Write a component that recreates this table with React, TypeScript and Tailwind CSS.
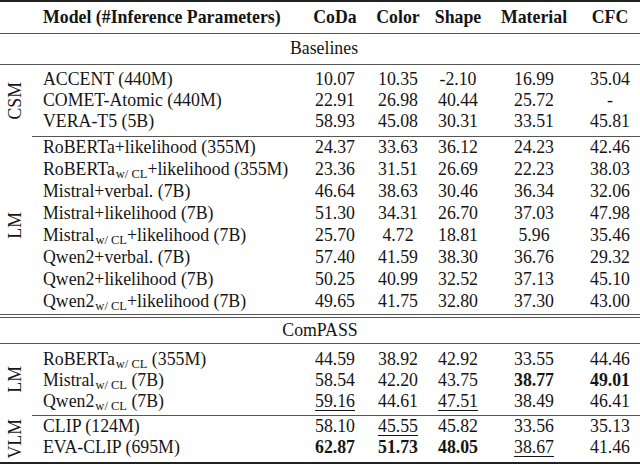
import type { ReactNode } from "react"

type Cell = string | { v: string; b?: boolean; u?: boolean }

interface Row {
  name: ReactNode
  vals: Cell[]
}

const colW = ["w-[66px]", "w-[60px]", "w-[60px]", "w-[92px]", "w-[60px]"]
const heads = ["CoDa", "Color", "Shape", "Material", "CFC"]

const wcl = <sub className="text-[12.5px] ml-[1px]">w/ CL</sub>

const csm: Row[] = [
  { name: "ACCENT (440M)", vals: ["10.07", "10.35", "-2.10", "16.99", "35.04"] },
  { name: "COMET-Atomic (440M)", vals: ["22.91", "26.98", "40.44", "25.72", "-"] },
  { name: "VERA-T5 (5B)", vals: ["58.93", "45.08", "30.31", "33.51", "45.81"] },
]

const lm: Row[] = [
  { name: "RoBERTa+likelihood (355M)", vals: ["24.37", "33.63", "36.12", "24.23", "42.46"] },
  { name: <>RoBERTa{wcl}+likelihood (355M)</>, vals: ["23.36", "31.51", "26.69", "22.23", "38.03"] },
  { name: "Mistral+verbal. (7B)", vals: ["46.64", "38.63", "30.46", "36.34", "32.06"] },
  { name: "Mistral+likelihood (7B)", vals: ["51.30", "34.31", "26.70", "37.03", "47.98"] },
  { name: <>Mistral{wcl}+likelihood (7B)</>, vals: ["25.70", "4.72", "18.81", "5.96", "35.46"] },
  { name: "Qwen2+verbal. (7B)", vals: ["57.40", "41.59", "38.30", "36.76", "29.32"] },
  { name: "Qwen2+likelihood (7B)", vals: ["50.25", "40.99", "32.52", "37.13", "45.10"] },
  { name: <>Qwen2{wcl}+likelihood (7B)</>, vals: ["49.65", "41.75", "32.80", "37.30", "43.00"] },
]

const lm2: Row[] = [
  { name: <>RoBERTa{wcl} (355M)</>, vals: ["44.59", "38.92", "42.92", "33.55", "44.46"] },
  { name: <>Mistral{wcl} (7B)</>, vals: ["58.54", "42.20", "43.75", { v: "38.77", b: true }, { v: "49.01", b: true }] },
  { name: <>Qwen2{wcl} (7B)</>, vals: [{ v: "59.16", u: true }, "44.61", { v: "47.51", u: true }, "38.49", "46.41"] },
]

const vlm: Row[] = [
  { name: "CLIP (124M)", vals: ["58.10", { v: "45.55", u: true }, "45.82", "33.56", "35.13"] },
  { name: "EVA-CLIP (695M)", vals: [{ v: "62.87", b: true }, { v: "51.73", b: true }, { v: "48.05", b: true }, { v: "38.67", u: true }, "41.46"] },
]

function Num({ c }: { c: Cell }) {
  if (typeof c === "string") return <>{c}</>
  return (
    <span className={(c.b ? "font-bold " : "") + (c.u ? "underline decoration-1 underline-offset-[3px]" : "")}>{c.v}</span>
  )
}

function TRow({ row, h }: { row: Row; h: string }) {
  return (
    <div className={"flex items-center " + h}>
      <div className="w-[270px] pl-[11px] whitespace-nowrap">{row.name}</div>
      {row.vals.map((v, i) => (
        <div key={i} className={"text-center " + colW[i]}>
          <Num c={v} />
        </div>
      ))}
    </div>
  )
}

function Section({ label, rows, h, className, cmid }: { label: string; rows: Row[]; h: string; className: string; cmid?: boolean }) {
  return (
    <div className="flex">
      <div className="w-[32px] flex items-center justify-center">
        <span className="[writing-mode:vertical-rl] rotate-180 leading-none">{label}</span>
      </div>
      <div className={"flex-1 " + (cmid ? "border-t border-[#555] " : "") + className}>
        {rows.map((r, i) => (
          <TRow key={i} row={r} h={h} />
        ))}
      </div>
    </div>
  )
}

export default function App() {
  return (
    <div className="w-[640px] h-[464px] bg-white text-[#151515] text-[17.8px] font-[family-name:Liberation_Serif,serif] leading-none">
      <div className="border-t-2 border-[#222]" />
      {/* header */}
      <div className="flex items-center h-[32px] font-bold border-b border-[#555]">
        <div className="w-[32px]" />
        <div className="w-[270px] pl-[11px]">Model (#Inference Parameters)</div>
        {heads.map((t, i) => (
          <div key={t} className={"text-center " + colW[i]}>{t}</div>
        ))}
      </div>
      <div className="h-[31px] flex items-center justify-center pl-[8px] border-b border-[#555]">Baselines</div>

      <Section label="CSM" rows={csm} h="h-[21px]" className="pt-[4px] pb-[4px]" />
      <Section label="LM" rows={lm} h="h-[22px]" className="pb-[1px]" cmid />

      <div className="border-t border-[#555]" />
      <div className="h-[2px]" />
      <div className="h-[27px] flex items-center justify-center border-t border-b border-[#555]">ComPASS</div>

      <Section label="LM" rows={lm2} h="h-[21px]" className="pt-[5px] pb-[3px]" />
      <Section label="VLM" rows={vlm} h="h-[21px]" className="pb-[4px]" cmid />
      <div className="border-t-2 border-[#222]" />
    </div>
  )
}
